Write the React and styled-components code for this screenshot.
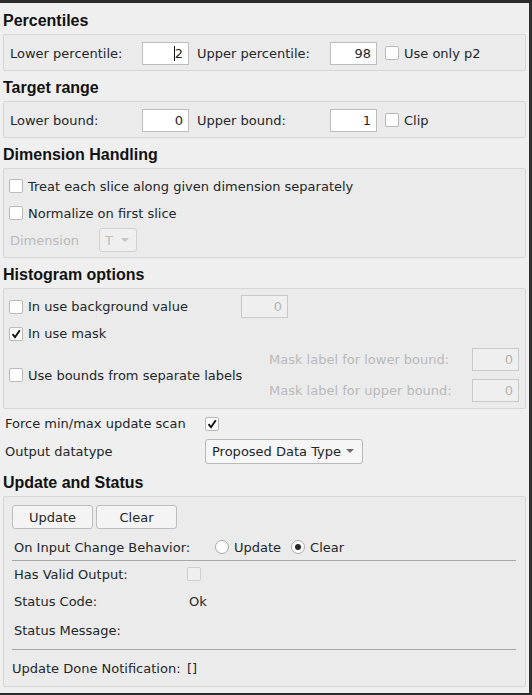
import styled, { createGlobalStyle } from "styled-components";

const GlobalStyle = createGlobalStyle`
  html, body {
    margin: 0;
    padding: 0;
    background: #efefef;
  }
  body {
    font-family: "DejaVu Sans", "Noto Sans", sans-serif;
    font-size: 13px;
    color: #232629;
  }
`;

const Window = styled.div`
  width: 532px;
  height: 695px;
  box-sizing: border-box;
  border-top: 3px solid #2b2b2b;
  border-right: 3px solid #2f2f2f;
  border-bottom: 2px solid #2b2b2b;
  background: #efefef;
  padding: 1px 3px 0 3px;
  display: flex;
  flex-direction: column;
  overflow: hidden;
`;

const SectionTitle = styled.div`
  font-family: "Liberation Sans", Arial, sans-serif;
  font-weight: bold;
  font-size: 16px;
  height: 20px;
  line-height: 20px;
  margin: 7px 0 3px;
  color: #111;
`;

const Group = styled.div`
  box-sizing: border-box;
  border: 1px solid #d6d6d6;
  border-radius: 2px;
  background: #ebebeb;
  padding: ${(p) => p.$pad || "6px"};
  display: flex;
  flex-direction: column;
  gap: ${(p) => p.$gap || 0}px;
`;

const RangeRow = styled.div`
  display: grid;
  grid-template-columns: 132px 47px 141px 47px 1fr;
  align-items: center;
  height: 23px;
`;

const Label = styled.span`
  white-space: nowrap;
  color: ${(p) => (p.$disabled ? "#b9b9b9" : "#232629")};
  padding-left: ${(p) => p.$indent || 0}px;
`;

const Field = styled.div`
  box-sizing: border-box;
  width: 47px;
  height: ${(p) => p.$h || 23}px;
  border: 1px solid ${(p) => (p.$disabled ? "#c9c9c9" : "#bdbdbd")};
  background: ${(p) => (p.$disabled ? "#efefef" : "#ffffff")};
  color: ${(p) => (p.$disabled ? "#b4b4b4" : "#232629")};
  text-align: right;
  padding-right: 5px;
  line-height: 21px;
`;

const Caret = styled.span`
  display: inline-block;
  width: 1px;
  height: 15px;
  background: #111;
  vertical-align: -3px;
`;

const CheckLabel = styled.label`
  display: flex;
  align-items: center;
  gap: 5px;
  height: ${(p) => p.$h || 24}px;
  margin-left: ${(p) => p.$offset || 0}px;
  white-space: nowrap;
`;

const Box = styled.span`
  box-sizing: border-box;
  width: 14px;
  height: 14px;
  flex: none;
  display: inline-flex;
  align-items: center;
  justify-content: center;
  border: 1px solid ${(p) => (p.$disabled ? "#cfcfcf" : "#b8b8b8")};
  border-radius: 2px;
  background: ${(p) => (p.$disabled ? "#efefef" : "#ffffff")};
`;

const CheckBox = ({ checked, disabled }) => (
  <Box $disabled={disabled}>
    {checked && (
      <svg width="12" height="12" viewBox="0 0 12 12">
        <path d="M2.5 6.2 L5 9.2 L9.8 2.2" fill="none" stroke="#151515" strokeWidth="2" />
      </svg>
    )}
  </Box>
);

const Combo = styled.div`
  box-sizing: border-box;
  width: ${(p) => p.$w}px;
  height: ${(p) => p.$h}px;
  display: flex;
  align-items: center;
  justify-content: space-between;
  padding: 0 ${(p) => p.$right || 8}px 0 ${(p) => p.$left || 6}px;
  border: 1px solid ${(p) => (p.$disabled ? "#d0d0d0" : "#b9b9b9")};
  border-radius: 3px;
  background: ${(p) => (p.$disabled ? "#efefef" : "#f6f6f6")};
  color: ${(p) => (p.$disabled ? "#bbbbbb" : "#232629")};
  white-space: nowrap;
`;

const Arrow = styled.span`
  width: 0;
  height: 0;
  margin-top: -1px;
  border-left: 4px solid transparent;
  border-right: 4px solid transparent;
  border-top: 4px solid ${(p) => (p.$disabled ? "#c4c4c4" : "#6b6b6b")};
`;

const DimRow = styled.div`
  display: grid;
  grid-template-columns: 89px 38px;
  align-items: center;
  height: 24px;
`;

const ValueRow = styled.div`
  display: grid;
  grid-template-columns: 231px 47px;
  align-items: center;
  height: 23px;
`;

const BoundsGrid = styled.div`
  display: grid;
  grid-template-columns: 259px 1fr 47px;
  grid-template-rows: 23px 23px;
  row-gap: 8px;
  align-items: center;
`;

const SpanCell = styled.div`
  grid-row: 1 / span 2;
`;

const FormRows = styled.div`
  display: grid;
  grid-template-columns: 200px auto;
  grid-template-rows: 23px 25px;
  row-gap: 4px;
  align-items: center;
  margin: 3px 0 2px;
  padding-left: 2px;
`;

const ButtonRow = styled.div`
  display: flex;
  gap: 3px;
  height: 24px;
  margin-bottom: 8px;
`;

const Button = styled.button`
  box-sizing: border-box;
  width: 81px;
  height: 24px;
  border: 1px solid #bdbdbd;
  border-radius: 3px;
  background: #f4f4f4;
  font-family: inherit;
  font-size: 13px;
  color: #232629;
  padding: 0;
`;

const StatusRow = styled.div`
  display: grid;
  grid-template-columns: ${(p) => p.$col || 173}px auto;
  align-items: center;
  height: 20px;
  padding-left: ${(p) => (p.$flush ? 0 : 2)}px;
  margin-top: ${(p) => p.$top || 0}px;
`;

const RadioGroup = styled.div`
  display: flex;
  align-items: center;
`;

const RadioOption = styled.label`
  display: flex;
  align-items: center;
  gap: 5px;
  margin-right: 10px;
`;

const RadioDot = styled.span`
  box-sizing: border-box;
  width: 14px;
  height: 14px;
  border-radius: 50%;
  border: 1px solid #a9a9a9;
  background: #fff;
  display: inline-flex;
  align-items: center;
  justify-content: center;
  &::after {
    content: "";
    width: 6px;
    height: 6px;
    border-radius: 50%;
    background: ${(p) => (p.$on ? "#262626" : "transparent")};
  }
`;

const Separator = styled.div`
  height: 1px;
  background: #a8a8a8;
  margin: ${(p) => p.$m};
`;

export default function App() {
  return (
    <>
      <GlobalStyle />
      <Window>
        <SectionTitle>Percentiles</SectionTitle>
        <Group>
          <RangeRow>
            <Label>Lower percentile:</Label>
            <Field>
              <Caret />2
            </Field>
            <Label $indent={8}>Upper percentile:</Label>
            <Field>98</Field>
            <CheckLabel $offset={8}>
              <CheckBox />
              Use only p2
            </CheckLabel>
          </RangeRow>
        </Group>

        <SectionTitle>Target range</SectionTitle>
        <Group>
          <RangeRow>
            <Label>Lower bound:</Label>
            <Field>0</Field>
            <Label $indent={8}>Upper bound:</Label>
            <Field>1</Field>
            <CheckLabel $offset={8}>
              <CheckBox />
              Clip
            </CheckLabel>
          </RangeRow>
        </Group>

        <SectionTitle>Dimension Handling</SectionTitle>
        <Group $pad="5px 6px" $gap={3}>
          <CheckLabel $offset={-1}>
            <CheckBox />
            Treat each slice along given dimension separately
          </CheckLabel>
          <CheckLabel $offset={-1}>
            <CheckBox />
            Normalize on first slice
          </CheckLabel>
          <DimRow>
            <Label $disabled>Dimension</Label>
            <Combo $w={38} $h={24} $left={5} $right={7} $disabled>
              T
              <Arrow $disabled />
            </Combo>
          </DimRow>
        </Group>

        <SectionTitle>Histogram options</SectionTitle>
        <Group>
          <ValueRow>
            <CheckLabel $h={23} $offset={-1}>
              <CheckBox />
              In use background value
            </CheckLabel>
            <Field $disabled>0</Field>
          </ValueRow>
          <CheckLabel $h={23} $offset={-1} style={{ margin: "4px 0 3px -1px" }}>
            <CheckBox checked />
            In use mask
          </CheckLabel>
          <BoundsGrid>
            <SpanCell>
              <CheckLabel $h={23} $offset={-1}>
                <CheckBox />
                Use bounds from separate labels
              </CheckLabel>
            </SpanCell>
            <Label $disabled>Mask label for lower bound:</Label>
            <Field $disabled>0</Field>
            <Label $disabled>Mask label for upper bound:</Label>
            <Field $disabled>0</Field>
          </BoundsGrid>
        </Group>

        <FormRows>
          <Label>Force min/max update scan</Label>
          <CheckBox checked />
          <Label>Output datatype</Label>
          <Combo $w={158} $h={25}>
            Proposed Data Type
            <Arrow />
          </Combo>
        </FormRows>

        <SectionTitle>Update and Status</SectionTitle>
        <Group $pad="8px 9px 8px 8px">
          <ButtonRow>
            <Button>Update</Button>
            <Button>Clear</Button>
          </ButtonRow>
          <StatusRow $col={201}>
            <Label>On Input Change Behavior:</Label>
            <RadioGroup>
              <RadioOption>
                <RadioDot />
                Update
              </RadioOption>
              <RadioOption>
                <RadioDot $on />
                Clear
              </RadioOption>
            </RadioGroup>
          </StatusRow>
          <Separator $m="3px 0 3px" />
          <StatusRow>
            <Label>Has Valid Output:</Label>
            <CheckBox disabled />
          </StatusRow>
          <StatusRow $top={7}>
            <Label>Status Code:</Label>
            <Label $indent={2}>Ok</Label>
          </StatusRow>
          <StatusRow $top={9}>
            <Label>Status Message:</Label>
            <Label />
          </StatusRow>
          <Separator $m="9px 0 8px" />
          <StatusRow $flush $col={175}>
            <Label>Update Done Notification:</Label>
            <Label>[]</Label>
          </StatusRow>
        </Group>
      </Window>
    </>
  );
}
